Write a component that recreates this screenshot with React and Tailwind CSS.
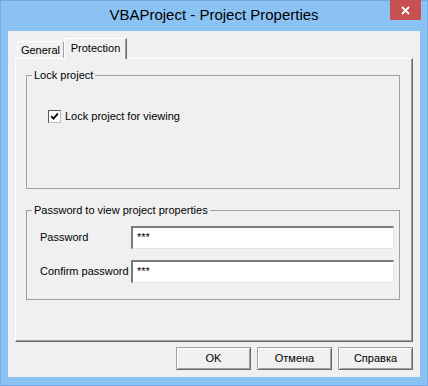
import React from "react";

const font = "font-['Liberation_Sans',Arial,sans-serif]";

const Button = ({ children }) => (
  <button
    className={`w-[75px] h-[23px] flex items-center justify-center text-[11px] text-black bg-[#f0f0f0] border border-t-[#a0a0a0] border-l-[#a0a0a0] border-r-[#696969] border-b-[#696969] shadow-[inset_1px_1px_0_#ffffff,inset_-1px_-1px_0_#a0a0a0]`}
  >
    {children}
  </button>
);

const Field = ({ label, value, className = "" }) => (
  <div className={`flex items-center ${className}`}>
    <span className="w-[91px] ml-[13px] text-[11px] leading-[13px] text-black">{label}</span>
    <div className="w-[263px] h-[23px] bg-white border-t-2 border-l-2 border-b border-r border-t-[#7a7a7a] border-l-[#7a7a7a] border-b-[#e3e3e3] border-r-[#e3e3e3] pl-[4px] pt-[3px] text-[11px] leading-[13px] text-black">
      {value}
    </div>
  </div>
);

export default function App() {
  return (
    <div className={`w-[428px] h-[386px] bg-[#8ac2f4] border border-[#72a9e0] flex flex-col ${font}`}>
      {/* title bar */}
      <div className="h-[30px] flex items-start pl-[37px]">
        <div className="flex-1 text-center text-[15px] leading-[17px] pt-[5px] text-black">
          VBAProject - Project Properties
        </div>
        <button className="w-[31px] h-[20px] -mt-px mr-[6px] bg-[#c75050] flex items-center justify-center">
          <svg width="9" height="9" viewBox="0 0 9 9">
            <path d="M1 1 L8 8 M8 1 L1 8" stroke="#ffffff" strokeWidth="1.8" />
          </svg>
        </button>
      </div>

      {/* client area */}
      <div className="ml-[7px] w-[412px] h-[346px] bg-[#f0f0f0] px-[7px] pt-[7px] flex flex-col">
        {/* tabs */}
        <div className="h-[20px] flex items-end">
          <div className="ml-[2px] w-[47px] h-[17px] border-t border-l border-r border-t-white border-l-white border-r-[#a0a0a0] flex items-center justify-center text-[11px] leading-[13px] text-black">
            General
          </div>
          <div className="relative z-10 -mb-px w-[63px] h-[21px] bg-[#f0f0f0] border-t border-l border-r border-t-white border-l-white border-r-[#696969] shadow-[inset_-1px_0_0_#a0a0a0] flex items-center justify-center pb-[2px] text-[11px] leading-[13px] text-black">
            Protection
          </div>
        </div>

        {/* tab panel */}
        <div className="h-[284px] border border-t-white border-l-white border-r-[#696969] border-b-[#696969] shadow-[inset_-1px_-1px_0_#a0a0a0]">
          <fieldset className="ml-[10px] mt-[10px] w-[374px] h-[120px] border border-[#a0a0a0]">
            <legend className="ml-[5px] px-[2px] text-[11px] leading-[13px] text-black">Lock project</legend>
            <div className="ml-[21px] mt-[28px] flex items-center">
              <span className="w-[13px] h-[13px] bg-white border border-t-[#555555] border-l-[#555555] border-b-[#bdbdbd] border-r-[#bdbdbd] flex items-center justify-center">
                <svg width="9" height="9" viewBox="0 0 9 9">
                  <path d="M1.2 4.2 L3.5 6.6 L7.8 1.6" stroke="#000000" strokeWidth="1.8" fill="none" />
                </svg>
              </span>
              <span className="ml-[4px] text-[11px] leading-[13px] text-black">Lock project for viewing</span>
            </div>
          </fieldset>

          <fieldset className="ml-[10px] mt-[15px] w-[374px] h-[96px] border border-[#a0a0a0]">
            <legend className="ml-[5px] px-[2px] text-[11px] leading-[13px] text-black">
              Password to view project properties
            </legend>
            <Field label="Password" value="***" className="mt-[9px]" />
            <Field label="Confirm password" value="***" className="mt-[11px]" />
          </fieldset>
        </div>

        {/* buttons */}
        <div className="mt-[5px] flex justify-end gap-[6px]">
          <Button>OK</Button>
          <Button>Отмена</Button>
          <Button>Справка</Button>
        </div>
      </div>
    </div>
  );
}
